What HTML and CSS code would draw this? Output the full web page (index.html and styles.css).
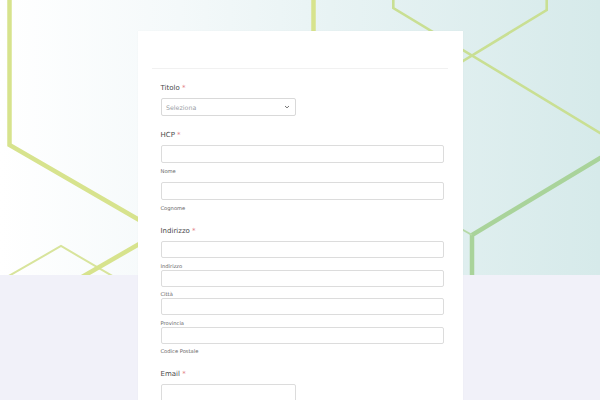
FILE: index.html
```html
<!DOCTYPE html>
<html lang="it">
<head>
<meta charset="utf-8">
<title>Modulo</title>
<link rel="stylesheet" href="styles.css">
</head>
<body>
<div class="page">
  <div class="hero" aria-hidden="true">
    <svg class="hex" width="600" height="275" viewBox="0 0 600 275">
      <polyline points="9.5,-5 9.5,145 160,232" class="l-yellow-thick"/>
      <polyline points="313.5,-5 313.5,40" class="l-yellow-thick"/>
      <polyline points="0,281 61,246 121,281" class="l-yellow-thin"/>
      <polyline points="75,281 160,232" class="l-yellow-thick"/>
      <polyline points="393.3,-5 393.3,8 620,145" class="l-lime-thin"/>
      <polyline points="546.7,-5 546.7,10 440,75" class="l-lime-thin"/>
      <polyline points="620,146 472,235 472,280" class="l-green-thick"/>
      <polyline points="440,217 472,235" class="l-green-thin"/>
    </svg>
  </div>

  <main class="card">
    <div class="card-head"></div>
    <form class="form">
      <div class="group group-first">
        <div class="label">Titolo <span class="req">*</span></div>
        <div class="select">
          <span class="placeholder">Seleziona</span>
          <svg class="chev" width="6" height="4" viewBox="0 0 6 4"><polyline points="1,1 3,2.9 5,1"/></svg>
        </div>
      </div>

      <div class="group">
        <div class="label">HCP <span class="req">*</span></div>
        <div class="input tall"></div>
        <div class="sub sub-hcp">Nome</div>
        <div class="input tall"></div>
        <div class="sub sub-last">Cognome</div>
      </div>

      <div class="group">
        <div class="label">Indirizzo <span class="req">*</span></div>
        <div class="input"></div>
        <div class="sub">Indirizzo</div>
        <div class="input"></div>
        <div class="sub">Città</div>
        <div class="input"></div>
        <div class="sub">Provincia</div>
        <div class="input"></div>
        <div class="sub">Codice Postale</div>
      </div>

      <div class="group">
        <div class="label">Email <span class="req">*</span></div>
        <div class="input short"></div>
      </div>
    </form>
  </main>
</div>
</body>
</html>
```

FILE: styles.css
```css
* { box-sizing: border-box; }
html, body { margin: 0; padding: 0; }
body {
  background: #f1f1f9;
  font-family: "DejaVu Sans", "Liberation Sans", sans-serif;
  color: #333;
  width: 600px;
  height: 400px;
  overflow: hidden;
}
.page {
  position: relative;
  width: 600px;
  height: 400px;
  padding-top: 31px;
  overflow: hidden;
}
.hero {
  position: absolute;
  left: 0;
  top: 0;
  width: 600px;
  height: 275px;
  overflow: hidden;
  background: linear-gradient(90deg, #ffffff 0%, #f4f9fa 30%, #e8f3f4 55%, #d6eaea 100%);
}
.hex { display: block; }
.hex polyline { fill: none; stroke-linejoin: miter; }
.l-yellow-thick { stroke: #d7e38d; stroke-width: 4.5; }
.l-yellow-thin { stroke: #d8e49c; stroke-width: 2; }
.l-lime-thin { stroke: #c9df93; stroke-width: 2.6; }
.l-green-thick { stroke: #a9d39a; stroke-width: 4.5; }
.l-green-thin { stroke: #b6d9a6; stroke-width: 2; }

.card {
  position: relative;
  z-index: 1;
  width: 325px;
  margin: 0 auto;
  height: 369px;
  overflow: hidden;
  background: #ffffff;
  box-shadow: 0 0 1px rgba(0, 0, 0, 0.06);
}
.card-head {
  height: 38px;
  margin: 0 14.5px;
  border-bottom: 1px solid #f1f1f1;
}
.form {
  padding: 0 19px 0 23px;
}
.group { margin-top: 14px; }
.label {
  font-size: 7px;
  line-height: 10px;
  color: #4a4a4a;
  margin-bottom: 5px;
}
.req { color: #e38088; }
.select {
  width: 135px;
  height: 18px;
  border: 1px solid #d9d9d9;
  border-radius: 2px;
  display: flex;
  align-items: center;
  justify-content: space-between;
  padding: 0 5px 0 4.5px;
}
.placeholder {
  font-size: 6.3px;
  color: #9aa0a6;
}
.chev polyline {
  fill: none;
  stroke: #666;
  stroke-width: 0.9;
}
.input {
  width: 283px;
  height: 17px;
  border: 1px solid #dcdcdc;
  border-radius: 2px;
  background: #fff;
}
.input.tall { height: 18px; }
.input.short { width: 135px; height: 20px; }
.sub {
  font-size: 5.2px;
  line-height: 8px;
  color: #666;
  margin-top: 3.5px;
}
.sub-hcp { margin-top: 4px; margin-bottom: 7px; }
.sub-last { margin-top: 4px; }
```
